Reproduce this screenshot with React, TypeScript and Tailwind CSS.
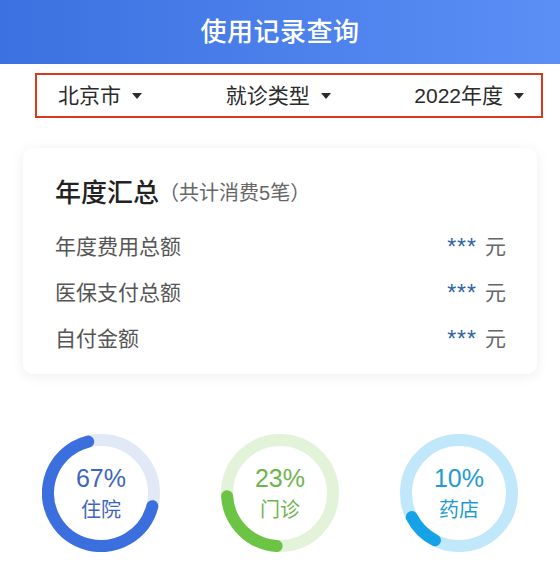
import React from "react";

const FONT = { fontFamily: '"Liberation Sans", "Noto Sans CJK SC", sans-serif' };

function Caret() {
  return (
    <svg width="10" height="6" viewBox="0 0 10 6" className="ml-[11px] shrink-0">
      <path d="M0 0h10L5 6z" fill="#2b2b2b" />
    </svg>
  );
}

type Ring = {
  percent: number;
  label: string;
  arc: string;
  track: string;
  text: string;
};

const rings: Ring[] = [
  { percent: 67, label: "住院", arc: "#3b6fdd", track: "#e1e9f7", text: "#3f64bf" },
  { percent: 23, label: "门诊", arc: "#6cc445", track: "#e2f3da", text: "#6db54b" },
  { percent: 10, label: "药店", arc: "#16a2e6", track: "#c0e7fa", text: "#1e9ad4" },
];

function Donut({ ring }: { ring: Ring }) {
  const size = 118;
  const stroke = 12;
  const r = (size - stroke) / 2;
  const c = 2 * Math.PI * r;
  const p = ring.percent / 100;
  // arcs are centred on the lower-left (clock 225deg)
  const start = 225 - p * 180;
  return (
    <div className="relative w-[118px] h-[118px]">
      <svg width={size} height={size} viewBox={`0 0 ${size} ${size}`} className="absolute inset-0">
        <circle cx={size / 2} cy={size / 2} r={r} fill="none" stroke={ring.track} strokeWidth={stroke} />
        <circle
          cx={size / 2}
          cy={size / 2}
          r={r}
          fill="none"
          stroke={ring.arc}
          strokeWidth={stroke}
          strokeLinecap="round"
          strokeDasharray={`${p * c} ${c}`}
          transform={`rotate(${start - 90} ${size / 2} ${size / 2})`}
        />
      </svg>
      <div className="relative flex h-full flex-col items-center justify-center gap-[3px]" style={{ color: ring.text }}>
        <span className="text-[25px] leading-[30px]">{ring.percent}%</span>
        <span className="text-[20px] leading-[28px]">{ring.label}</span>
      </div>
    </div>
  );
}

export default function App() {
  const rows = ["年度费用总额", "医保支付总额", "自付金额"];

  return (
    <div className="min-h-screen w-[560px] bg-white" style={FONT}>
      <div className="flex h-[64px] items-center justify-center bg-gradient-to-r from-[#3b71e0] to-[#5b8ff6]">
        <h1 className="text-[26px] font-medium tracking-[0.5px] text-white">使用记录查询</h1>
      </div>

      <div className="ml-[35px] mr-[17px] mt-[9px] flex h-[45px] items-center justify-between border-2 border-[#d93a1f] pl-[21px] pr-[17px] text-[21px] text-[#2b2b2b]">
        <div className="flex items-center">
          北京市
          <Caret />
        </div>
        <div className="flex items-center">
          就诊类型
          <Caret />
        </div>
        <div className="flex items-center">
          2022年度
          <Caret />
        </div>
      </div>

      <div className="mx-[23px] mt-[30px] rounded-[10px] bg-white pl-[32px] pr-[31px] pt-[28px] pb-[12px] shadow-[0_2px_14px_rgba(0,0,0,0.07)]">
        <div className="flex h-[34px] items-center">
          <span className="text-[26px] font-medium text-[#222]">年度汇总</span>
          <span className="text-[20px] text-[#666]">（共计消费5笔）</span>
        </div>
        <div className="mt-[14px]">
          {rows.map((label) => (
            <div key={label} className="flex h-[46px] items-center justify-between text-[21px]">
              <span className="text-[#555]">{label}</span>
              <span className="flex items-center">
                <span className="text-[23px] tracking-[1px] text-[#2f64a8]">***</span>
                <span className="ml-[8px] text-[#666]">元</span>
              </span>
            </div>
          ))}
        </div>
      </div>

      <div className="mt-[60px] flex justify-between px-[42px]">
        {rings.map((ring) => (
          <Donut key={ring.label} ring={ring} />
        ))}
      </div>
    </div>
  );
}
